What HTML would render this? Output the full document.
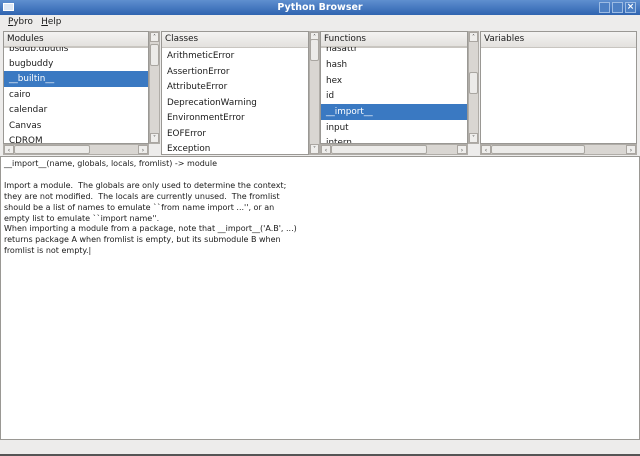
<!DOCTYPE html><html><head><style>
*{margin:0;padding:0;box-sizing:border-box}
body{width:640px;height:456px;background:#edeceb;font-family:"DejaVu Sans","Liberation Sans",sans-serif;font-size:8.5px;color:#1a1a1a;position:relative;overflow:hidden}
.a{position:absolute}
.title{left:0;top:0;width:640px;height:15px;background:linear-gradient(#5f8fcf,#2f64b0);color:#fff;font-weight:bold;font-size:9.5px;text-align:center;line-height:15px}
.pane{background:#fff;border:1px solid #9a9894}
.hdr{background:linear-gradient(#f4f3f2,#e3e1de);border-bottom:1px solid #c8c5c0;height:16px;line-height:15px;padding-left:3px;font-size:8.8px}
.row{position:absolute;left:2px;height:16px;line-height:16px;padding-left:3px;font-size:8.8px}
.sel{background:#3a79c2;color:#fff}
.vs{background:#d9d6d2;border:1px solid #b0ada8}
.thumb{background:#ecebe9;border:1px solid #a9a6a1;border-radius:2px}
.btn{background:#efeeec;border:1px solid #aaa6a1;font-size:6px;text-align:center;line-height:9px;color:#444}
.txt{left:0;top:156px;width:640px;height:284px;background:#fff;border:1px solid #9a9894;padding:2px 3px;font-size:8px;line-height:10.9px;white-space:pre}
</style></head><body>
<div class="a title">Python Browser</div>
<div class="a" style="left:3px;top:3px;width:11px;height:8px;background:#dfe8f5;border:1px solid #fff"></div>
<div class="a" style="left:599px;top:2px;width:11px;height:11px;background:#4d80c4;border:1px solid #9cbbe3"></div>
<div class="a" style="left:612px;top:2px;width:11px;height:11px;background:#4d80c4;border:1px solid #9cbbe3"></div>
<div class="a" style="left:625px;top:2px;width:11px;height:11px;background:#4d80c4;border:1px solid #9cbbe3;color:#fff;font-size:9px;line-height:9px;text-align:center;font-weight:bold">×</div>
<div class="a" style="left:8px;top:17px;font-size:8.8px"><u>P</u>ybro&nbsp;&nbsp;&nbsp;<u>H</u>elp</div>

<div class="a pane" style="left:3px;top:31px;width:146px;height:113px;overflow:hidden">
<div class="hdr">Modules</div>
<div class="row" style="top:9px;width:140px">bsddb.dbutils</div>
<div class="row" style="top:24px;width:140px">bugbuddy</div>
<div class="row sel" style="top:39px;width:145px;left:0;padding-left:5px">__builtin__</div>
<div class="row" style="top:55px">cairo</div>
<div class="row" style="top:70px">calendar</div>
<div class="row" style="top:86px">Canvas</div>
<div class="row" style="top:101px">CDROM</div>
</div>
<div class="a hdr" style="left:4px;top:32px;width:144px;height:15px">Modules</div>
<div class="a vs" style="left:149px;top:31px;width:11px;height:113px"><div class="a btn" style="left:0;top:0;width:9px;height:10px">˄</div><div class="a thumb" style="left:0;top:12px;width:9px;height:22px"></div><div class="a btn" style="left:0;top:101px;width:9px;height:10px">˅</div></div>
<div class="a vs" style="left:3px;top:144px;width:146px;height:11px"><div class="a btn" style="left:0;top:0;width:10px;height:9px">‹</div><div class="a thumb" style="left:10px;top:0;width:76px;height:9px"></div><div class="a btn" style="left:134px;top:0;width:10px;height:9px">›</div></div>

<div class="a pane" style="left:161px;top:31px;width:148px;height:124px;overflow:hidden">
<div class="hdr">Classes</div>
<div class="row" style="top:16px">ArithmeticError</div>
<div class="row" style="top:32px">AssertionError</div>
<div class="row" style="top:47px">AttributeError</div>
<div class="row" style="top:63px">DeprecationWarning</div>
<div class="row" style="top:78px">EnvironmentError</div>
<div class="row" style="top:94px">EOFError</div>
<div class="row" style="top:109px">Exception</div>
</div>
<div class="a vs" style="left:309px;top:31px;width:11px;height:124px"><div class="a btn" style="left:0;top:0;width:9px;height:10px">˄</div><div class="a thumb" style="left:0;top:7px;width:9px;height:22px"></div><div class="a btn" style="left:0;top:112px;width:9px;height:10px">˅</div></div>

<div class="a pane" style="left:320px;top:31px;width:148px;height:113px;overflow:hidden">
<div class="hdr">Functions</div>
<div class="row" style="top:9px">hasattr</div>
<div class="row" style="top:25px">hash</div>
<div class="row" style="top:41px">hex</div>
<div class="row" style="top:56px">id</div>
<div class="row sel" style="top:72px;left:0;width:146px;padding-left:5px">__import__</div>
<div class="row" style="top:88px">input</div>
<div class="row" style="top:103px">intern</div>
</div>
<div class="a hdr" style="left:321px;top:32px;width:146px;height:15px">Functions</div>
<div class="a vs" style="left:468px;top:31px;width:11px;height:113px"><div class="a btn" style="left:0;top:0;width:9px;height:10px">˄</div><div class="a thumb" style="left:0;top:40px;width:9px;height:22px"></div><div class="a btn" style="left:0;top:101px;width:9px;height:10px">˅</div></div>
<div class="a vs" style="left:320px;top:144px;width:148px;height:11px"><div class="a btn" style="left:0;top:0;width:10px;height:9px">‹</div><div class="a thumb" style="left:10px;top:0;width:96px;height:9px"></div><div class="a btn" style="left:136px;top:0;width:10px;height:9px">›</div></div>

<div class="a pane" style="left:480px;top:31px;width:157px;height:113px">
<div class="hdr">Variables</div>
</div>
<div class="a vs" style="left:480px;top:144px;width:157px;height:11px"><div class="a btn" style="left:0;top:0;width:10px;height:9px">‹</div><div class="a thumb" style="left:10px;top:0;width:94px;height:9px"></div><div class="a btn" style="left:145px;top:0;width:10px;height:9px">›</div></div>

<div class="a txt">__import__(name, globals, locals, fromlist) -&gt; module

Import a module.  The globals are only used to determine the context;
they are not modified.  The locals are currently unused.  The fromlist
should be a list of names to emulate ``from name import ...'', or an
empty list to emulate ``import name''.
When importing a module from a package, note that __import__('A.B', ...)
returns package A when fromlist is empty, but its submodule B when
fromlist is not empty.|</div>
<div class="a" style="left:0;top:454px;width:640px;height:2px;background:#555"></div>
</body></html>
